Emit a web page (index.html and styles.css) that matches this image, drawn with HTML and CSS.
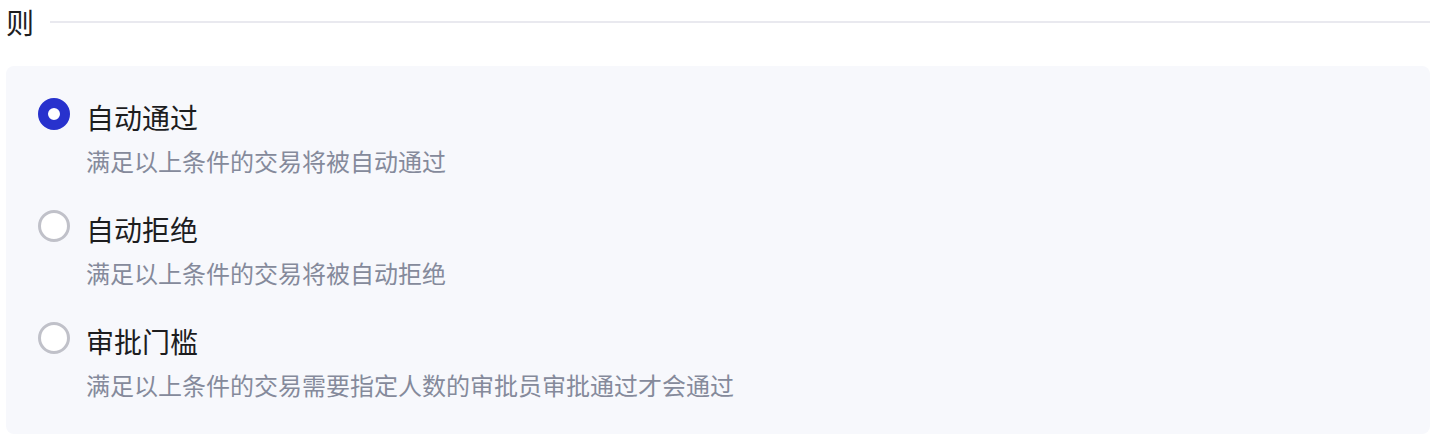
FILE: index.html
```html
<!DOCTYPE html>
<html lang="zh-CN">
<head>
<meta charset="utf-8">
<link rel="stylesheet" href="styles.css">
</head>
<body>
<div class="header">
  <span class="title">则</span>
  <span class="rule"></span>
</div>
<div class="panel">
  <div class="option">
    <span class="radio checked"></span>
    <div class="text">
      <div class="label">自动通过</div>
      <div class="desc">满足以上条件的交易将被自动通过</div>
    </div>
  </div>
  <div class="option">
    <span class="radio"></span>
    <div class="text">
      <div class="label">自动拒绝</div>
      <div class="desc">满足以上条件的交易将被自动拒绝</div>
    </div>
  </div>
  <div class="option">
    <span class="radio"></span>
    <div class="text">
      <div class="label">审批门槛</div>
      <div class="desc">满足以上条件的交易需要指定人数的审批员审批通过才会通过</div>
    </div>
  </div>
</div>
</body>
</html>
```
FILE: styles.css
```css
html, body {
  margin: 0;
  padding: 0;
  background: #ffffff;
}
body {
  font-family: "Noto Sans CJK SC", "Noto Sans", sans-serif;
  color: #1d1d1f;
}
.header {
  display: flex;
  align-items: center;
  height: 44px;
  padding-left: 6px;
  padding-right: 8px;
  gap: 16px;
}
.title {
  font-size: 28px;
  line-height: 42px;
  color: #1d1d1f;
}
.rule {
  flex: 1;
  height: 2px;
  background: #e9e9ef;
}
.panel {
  margin: 22px 8px 0 6px;
  padding: 31px 32px;
  background: #f7f8fc;
  border-radius: 8px;
  display: flex;
  flex-direction: column;
  gap: 30px;
}
.option {
  display: flex;
  align-items: flex-start;
  gap: 16px;
}
.radio {
  flex: none;
  width: 32px;
  height: 32px;
  margin-top: 1px;
  box-sizing: border-box;
  border-radius: 50%;
  border: 3px solid #c0c1c9;
  background: #ffffff;
}
.radio.checked {
  border: 10px solid #2832cd;
}
.text {
  display: flex;
  flex-direction: column;
  gap: 6px;
}
.label {
  font-size: 28px;
  line-height: 40px;
  color: #1d1d1f;
}
.desc {
  font-size: 24px;
  line-height: 36px;
  color: #858a9b;
}
```
